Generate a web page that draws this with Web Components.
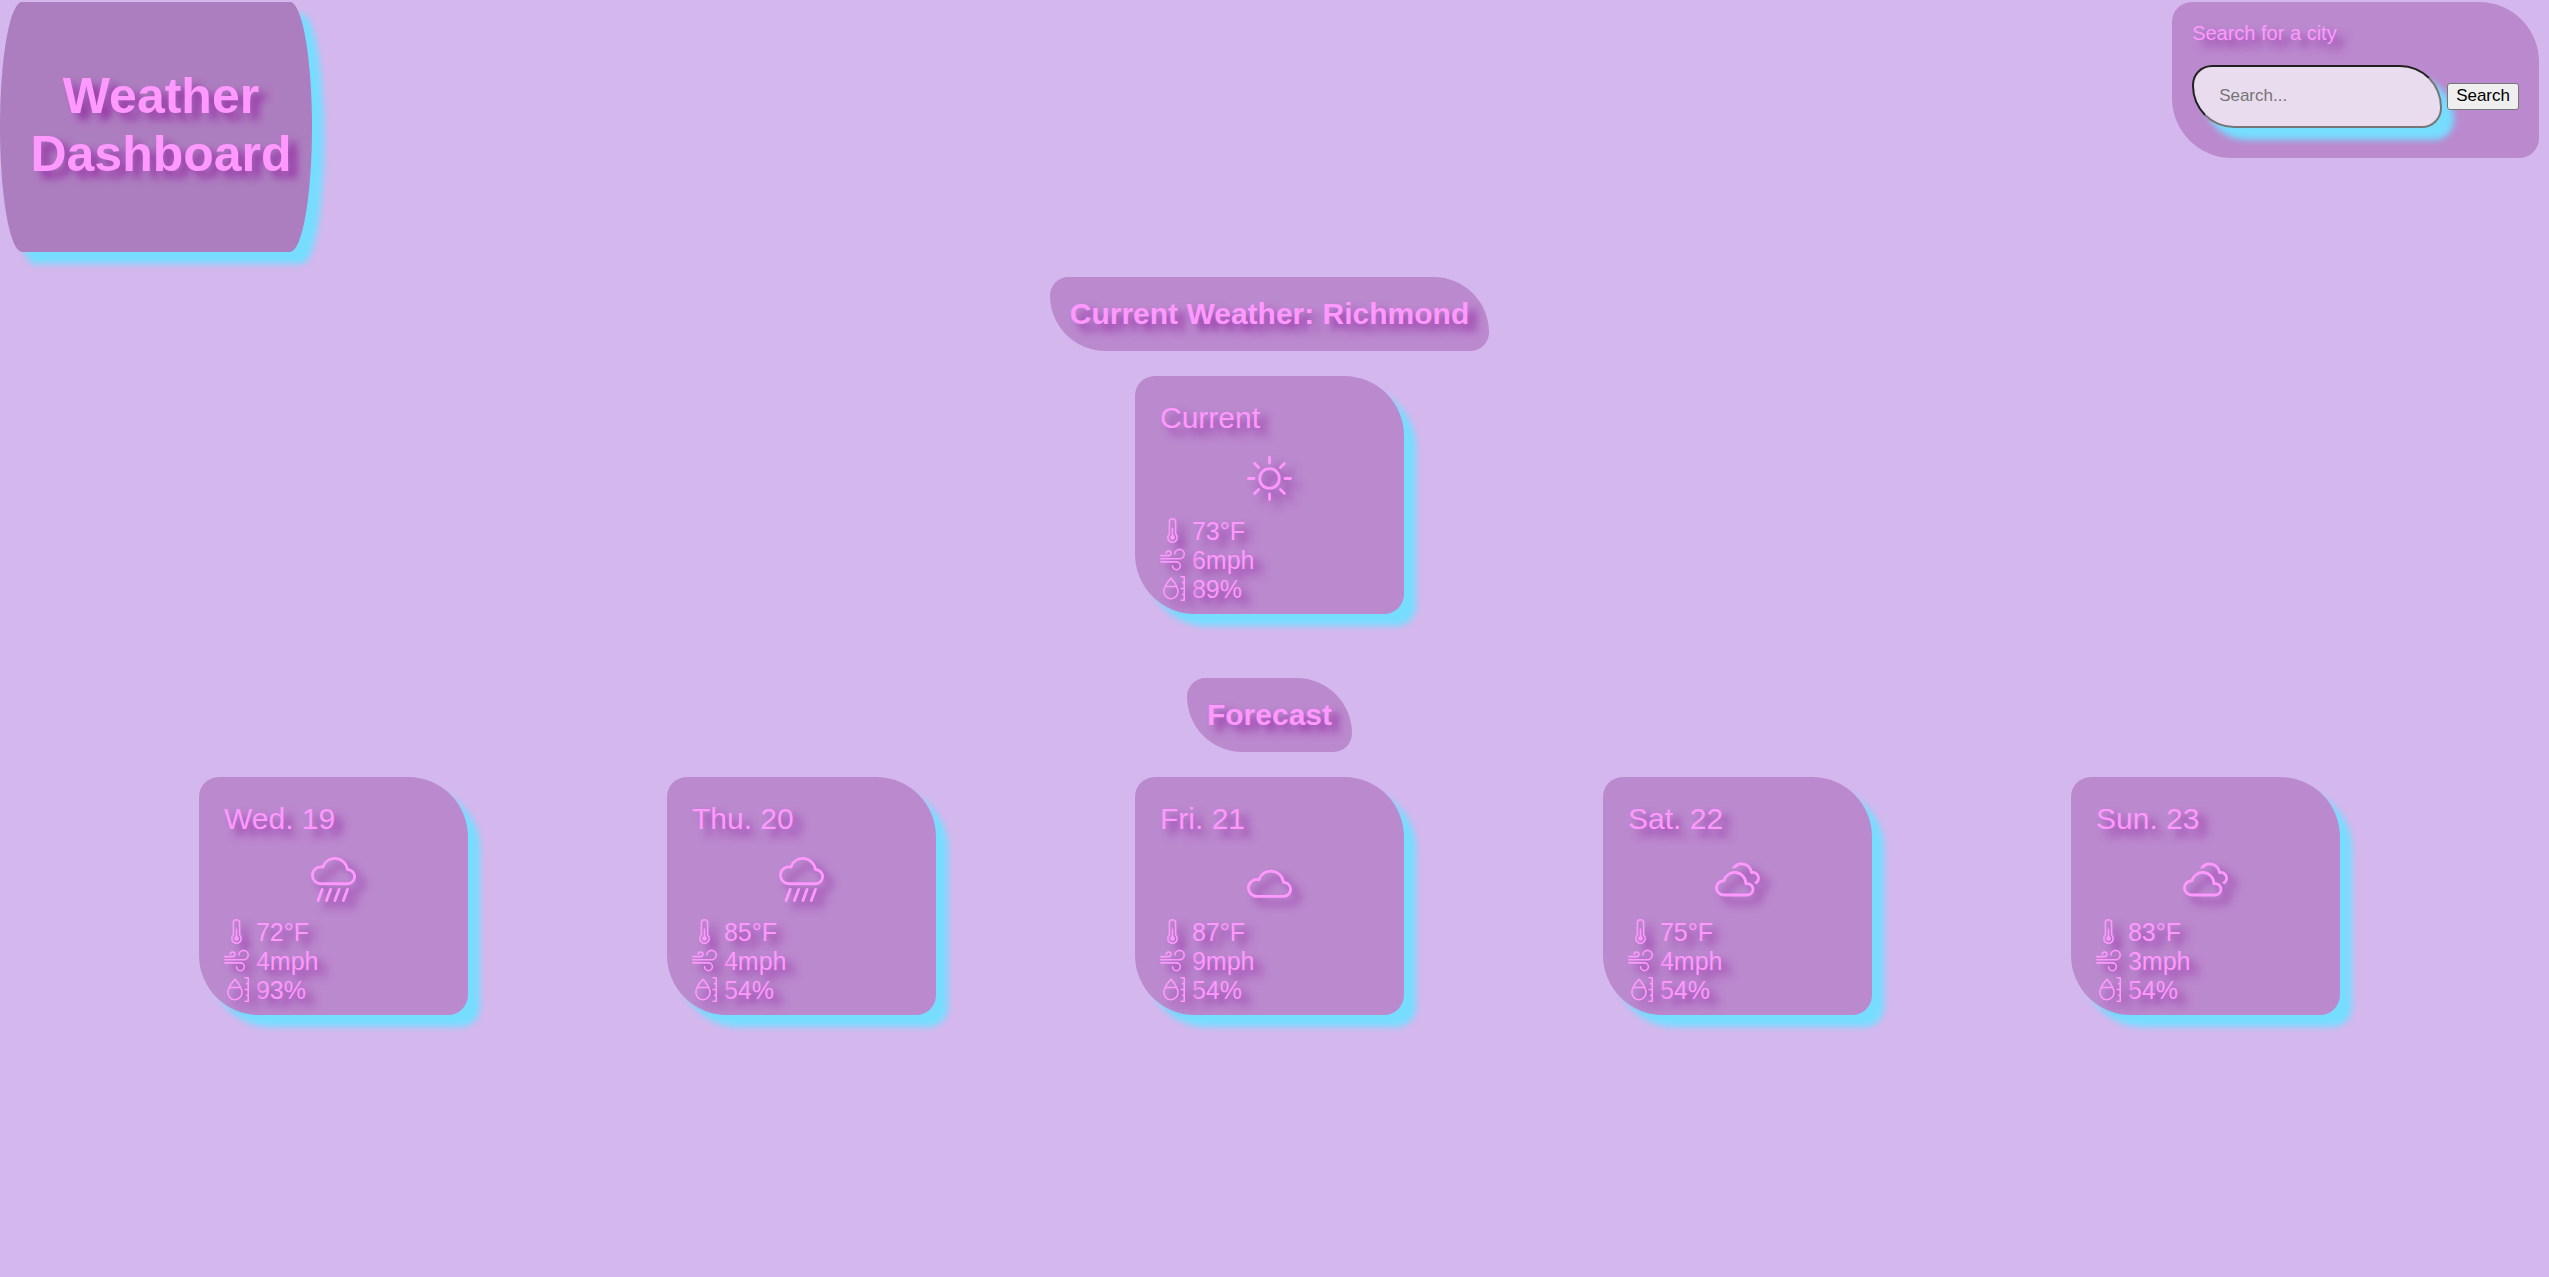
<!DOCTYPE html>
<html lang="en">
<head>
<meta charset="utf-8">
<meta name="viewport" content="width=device-width, initial-scale=1">
<title>Weather Dashboard</title>
<style>
  :root {
    --page: #d4b7ed;
    --panel: #bb89ce;
    --banner: #ad7ebf;
    --ink: #ff99ff;
    --glow: #77ddff;
    --shade: #9632a6;
    --leaf: 20px 60px;
  }
  body {
    margin: 0;
    min-height: 100vh;
    background: var(--page);
    color: var(--ink);
    font-family: "Liberation Sans", Arial, sans-serif;
    text-shadow: 8px 7px 8px var(--shade);
  }
</style>
</head>
<body>
<weather-dashboard></weather-dashboard>

<script>
const ICONS = {
  sun: `<g fill="none" stroke="currentColor" stroke-linecap="round"><circle cx="8" cy="8" r="3.5"/><path d="M8 .5v2M8 13.500v2M.5 8h2M13.500 8h2M2.700 2.700l1.410 1.410M11.890 11.890l1.410 1.410M2.700 13.300l1.410-1.410M11.890 4.110l1.410-1.410"/></g>`,
  rain: `<path d="M13.405 4.027a5.001 5.001 0 0 0-9.499-1.004A3.5 3.5 0 1 0 3.5 10H13a3 3 0 0 0 .405-5.973zM8.5 1a4 4 0 0 1 3.976 3.555.5.5 0 0 0 .5.445H13a2 2 0 0 1-.001 4H3.5a2.5 2.5 0 1 1 .605-4.926.5.5 0 0 0 .596-.329A4.002 4.002 0 0 1 8.500 1z"/><path fill="none" stroke="currentColor" stroke-linecap="round" d="M4 11.500l-1.500 4M7 11.500l-1.500 4M10 11.500l-1.500 4M13 11.500l-1.500 4"/>`,
  cloudy: `<path d="M13.405 8.527a5.001 5.001 0 0 0-9.499-1.004A3.5 3.5 0 1 0 3.5 14.500H13a3 3 0 0 0 .405-5.973zM8.500 5.500a4 4 0 0 1 3.976 3.555.5.5 0 0 0 .5.445H13a2 2 0 0 1-.001 4H3.500a2.500 2.500 0 1 1 .605-4.926.5.5 0 0 0 .596-.329A4.002 4.002 0 0 1 8.500 5.500z"/>`,
  clouds: `<path d="M16 7.500a2.500 2.500 0 0 1-1.456 2.272 3.513 3.513 0 0 0-.65-.824 1.500 1.500 0 0 0-.789-2.896.5.5 0 0 1-.627-.421 3 3 0 0 0-5.220-1.625 5.587 5.587 0 0 0-1.276.088 4.002 4.002 0 0 1 7.392.91A2.500 2.500 0 0 1 16 7.500z"/><path d="M7 5a4.500 4.500 0 0 1 4.473 4h.027a2.500 2.500 0 0 1 0 5H3a3 3 0 0 1-.247-5.990A4.502 4.502 0 0 1 7 5zm3.500 4.500a3.500 3.500 0 0 0-6.890-.873.5.5 0 0 1-.51.375A2 2 0 1 0 3 13h8.500a1.500 1.500 0 1 0-.376-2.953.5.5 0 0 1-.624-.492V9.500z"/>`,
  thermometer: `<path d="M9.500 12.500a1.500 1.500 0 1 1-2-1.415V6.500a.5.5 0 0 1 1 0v4.585a1.500 1.500 0 0 1 1 1.415z"/><path d="M5.500 2.500a2.500 2.500 0 0 1 5 0v7.550a3.500 3.500 0 1 1-5 0V2.500zM8 1a1.500 1.500 0 0 0-1.500 1.500v7.987l-.167.15a2.500 2.500 0 1 0 3.333 0l-.166-.15V2.500A1.500 1.500 0 0 0 8 1z"/>`,
  wind: `<path d="M12.500 2A2.500 2.500 0 0 0 10 4.500a.5.5 0 0 1-1 0A3.500 3.500 0 1 1 12.500 8H.5a.5.5 0 0 1 0-1h12a2.500 2.500 0 0 0 0-5zm-7 1a1 1 0 0 0-1 1 .5.5 0 0 1-1 0 2 2 0 1 1 2 2h-5a.5.5 0 0 1 0-1h5a1 1 0 0 0 0-2zM0 9.500A.5.5 0 0 1 .5 9h10.042a3 3 0 1 1-3 3 .5.5 0 0 1 1 0 2 2 0 1 0 2-2H.5a.5.5 0 0 1-.5-.5z"/>`,
  moisture: `<path d="M13.500 0a.5.5 0 0 0 0 1H15v2.750h-.5a.5.5 0 0 0 0 1h.5V7.500h-1.500a.5.5 0 0 0 0 1H15v2.750h-.5a.5.5 0 0 0 0 1h.5V15h-1.500a.5.5 0 0 0 0 1h2a.5.5 0 0 0 .5-.5V.5a.5.5 0 0 0-.5-.5h-2z"/><path d="M7.364 1.157a.5.5 0 0 0-.728 0c-.4.440-.9 1.020-1.384 1.637-.769.983-1.714 2.325-2.385 3.727C2.368 7.564 2 8.682 2 9.733 2 12.614 4.212 15 7 15s5-2.386 5-5.267c0-1.050-.368-2.169-.867-3.212-.671-1.402-1.616-2.744-2.385-3.727a28.458 28.458 0 0 0-1.384-1.637zM7 2.247c.24.274.588.686.960 1.163.611.781 1.320 1.776 1.901 2.827H4.140c.58-1.051 1.290-2.046 1.900-2.827.373-.477.720-.889.960-1.163zM3 9.733c0-.755.244-1.612.638-2.496h6.724c.395.884.638 1.741.638 2.496C11 12.117 9.182 14 7 14s-4-1.883-4-4.267z" fill-rule="evenodd"/>`
};

class WeatherIcon extends HTMLElement {
  connectedCallback() {
    this.attachShadow({ mode: "open" }).innerHTML = `
      <style>
        :host { display: inline-block; width: 1em; height: 1em; vertical-align: -3px; }
        svg { display: block; width: 100%; height: 100%; overflow: visible; filter: drop-shadow(8px 7px 4px var(--shade)); }
      </style>
      <svg viewBox="0 0 16 16" fill="currentColor" aria-hidden="true">${ICONS[this.getAttribute("name")]}</svg>`;
  }
}

class TitleBanner extends HTMLElement {
  constructor() {
    super();
    this.attachShadow({ mode: "open" }).innerHTML = `
      <style>
        :host {
          display: flex; align-items: center; box-sizing: border-box;
          width: 312px; height: 250px; padding: 0 20px 4px 30px;
          background: var(--banner); border-radius: 22px / 50%;
          box-shadow: 12px 12px 6px var(--glow);
        }
        h1 { margin: 0; font-size: 50px; line-height: 58px; text-align: center; }
      </style>
      <h1><slot></slot></h1>`;
  }
}

class CitySearch extends HTMLElement {
  constructor() {
    super();
    this.attachShadow({ mode: "open" }).innerHTML = `
      <style>
        :host { display: block; padding: 20px 20px 30px; background: var(--panel); border-radius: var(--leaf); }
        form { display: grid; gap: 20px; }
        label { font-size: 20px; line-height: 23px; }
        .row { display: flex; align-items: center; gap: 5px; }
        input, button { font-family: inherit; font-size: 17px; line-height: 19px; }
        input {
          box-sizing: border-box; width: 250px; height: 63px; padding: 19px 25px 21px;
          background: #e9dcee; border: 2px inset #767676; border-radius: 20px 42px;
          box-shadow: 12px 12px 6px var(--glow);
        }
        button { padding: 2px 8px 4px; background: #efefef; color: #000; border: 1px solid #767676; border-radius: 3px; }
      </style>
      <form onsubmit="return false">
        <label for="city">Search for a city</label>
        <div class="row"><input id="city" type="text" placeholder="Search..."><button type="submit">Search</button></div>
      </form>`;
  }
}

class SectionHeading extends HTMLElement {
  constructor() {
    super();
    this.attachShadow({ mode: "open" }).innerHTML = `
      <style>
        :host { display: block; padding: 20px; background: var(--panel); border-radius: var(--leaf); }
        h2 { margin: 0; font-size: 30px; line-height: 34px; }
      </style>
      <h2><slot></slot></h2>`;
  }
}

class WeatherCard extends HTMLElement {
  connectedCallback() {
    const get = (name) => this.getAttribute(name);
    this.attachShadow({ mode: "open" }).innerHTML = `
      <style>
        :host {
          display: block; box-sizing: border-box; width: 269px; padding: 25px 25px 10px;
          background: var(--panel); border-radius: var(--leaf);
          box-shadow: 12px 12px 6px var(--glow);
        }
        h3 { margin: 0; font-size: 30px; font-weight: 400; line-height: 34px; }
        .sky { display: flex; justify-content: center; margin: 21px 0 16px; font-size: 45px; }
        p { margin: 0; font-size: 25px; line-height: 29px; height: 29px; }
      </style>
      <h3><slot></slot></h3>
      <div class="sky"><weather-icon name="${get("sky")}"></weather-icon></div>
      <p><weather-icon name="thermometer"></weather-icon> ${get("temp")}°F</p>
      <p><weather-icon name="wind"></weather-icon> ${get("wind")}mph</p>
      <p><weather-icon name="moisture"></weather-icon> ${get("humidity")}%</p>`;
  }
}

class WeatherDashboard extends HTMLElement {
  constructor() {
    super();
    this.attachShadow({ mode: "open" }).innerHTML = `
      <style>
        :host { display: block; padding: 2px 10px 25px 0; }
        header { display: flex; justify-content: space-between; align-items: flex-start; }
        section { display: flex; flex-direction: column; align-items: center; gap: 25px; margin-top: 25px; }
        section + section { margin-top: 64px; }
        .days { display: flex; justify-content: space-evenly; width: 100%; }
      </style>
      <header>
        <title-banner>Weather Dashboard</title-banner>
        <city-search></city-search>
      </header>
      <main>
        <section>
          <section-heading>Current Weather: Richmond</section-heading>
          <weather-card sky="sun" temp="73" wind="6" humidity="89">Current</weather-card>
        </section>
        <section>
          <section-heading>Forecast</section-heading>
          <div class="days">
            <weather-card sky="rain" temp="72" wind="4" humidity="93">Wed. 19</weather-card>
            <weather-card sky="rain" temp="85" wind="4" humidity="54">Thu. 20</weather-card>
            <weather-card sky="cloudy" temp="87" wind="9" humidity="54">Fri. 21</weather-card>
            <weather-card sky="clouds" temp="75" wind="4" humidity="54">Sat. 22</weather-card>
            <weather-card sky="clouds" temp="83" wind="3" humidity="54">Sun. 23</weather-card>
          </div>
        </section>
      </main>`;
  }
}

customElements.define("weather-icon", WeatherIcon);
customElements.define("title-banner", TitleBanner);
customElements.define("city-search", CitySearch);
customElements.define("section-heading", SectionHeading);
customElements.define("weather-card", WeatherCard);
customElements.define("weather-dashboard", WeatherDashboard);
</script>
</body>
</html>
